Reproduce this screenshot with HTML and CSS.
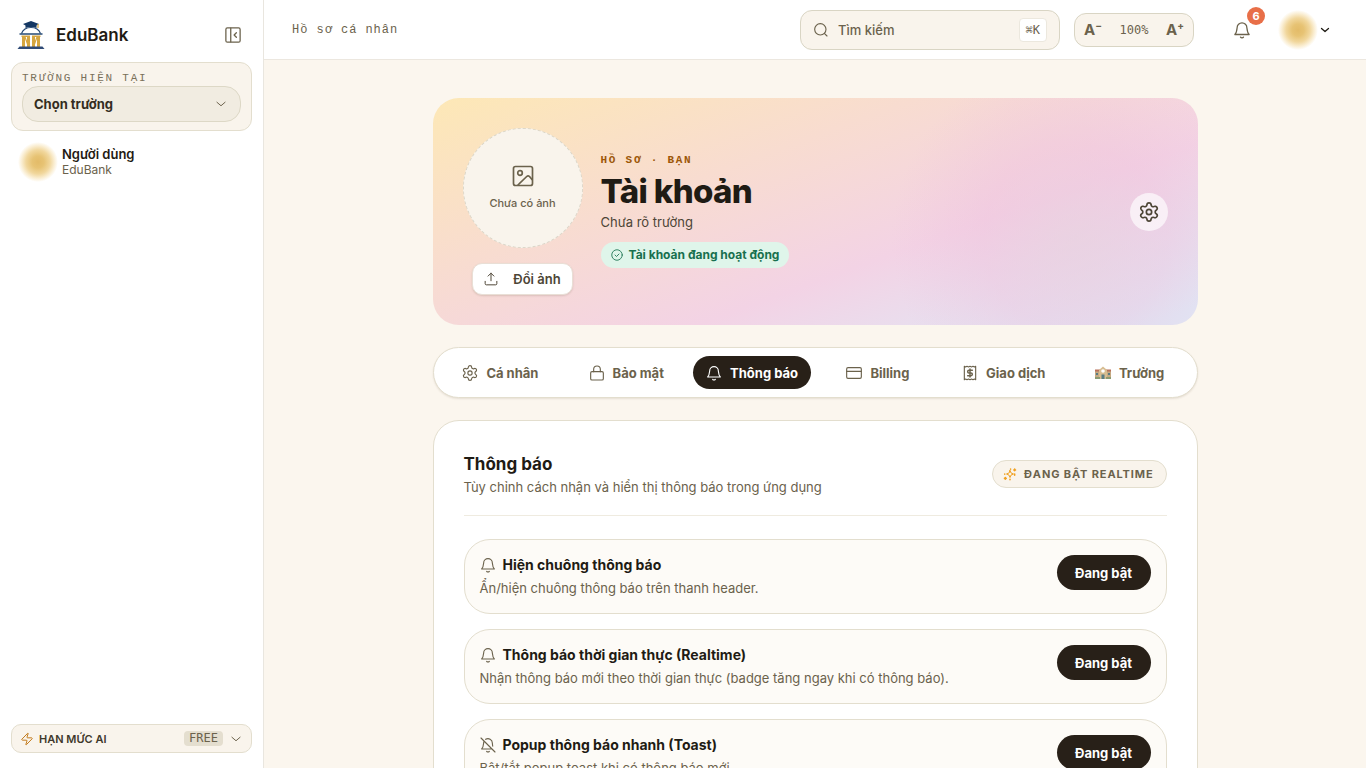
FILE: index.html
```html
<!DOCTYPE html>
<html lang="vi">
<head>
<meta charset="utf-8">
<meta name="viewport" content="width=device-width, initial-scale=1">
<title>EduBank – Hồ sơ cá nhân</title>
<link rel="stylesheet" href="styles.css">
</head>
<body>
<svg class="sprite" aria-hidden="true">
  <symbol id="i-bell" viewBox="0 0 24 24"><path d="M10 21.500a2.500 2.500 0 0 0 4 0M2.500 18h19c-1.800-1.800-2.500-3.500-3-9a6.500 6.500 0 0 0-13 0c-.5 5.500-1.200 7.200-3 9z"/></symbol>
  <symbol id="i-bell-off" viewBox="0 0 24 24"><path d="M10 21.500a2.500 2.500 0 0 0 4 0M17.500 18h-15c1.800-1.800 2.500-3.500 3-9 0-1 .2-1.800.5-2.500M8.500 3.500a6.500 6.500 0 0 1 10 5.500c.2 2 .3 3.500.6 4.700M1.500 1.500l21 21"/></symbol>
  <symbol id="i-gear" viewBox="0 0 24 24"><path d="M9.500 3.500a2.500 2.500 0 0 1 5 0 2.500 2.500 0 0 0 3.500 2 2.500 2.500 0 0 1 2.600 4.300 2.500 2.500 0 0 0 0 4.300 2.500 2.500 0 0 1-2.600 4.400 2.500 2.500 0 0 0-3.500 2 2.500 2.500 0 0 1-5 0 2.500 2.500 0 0 0-3.500-2 2.500 2.500 0 0 1-2.600-4.400 2.500 2.500 0 0 0 0-4.300A2.500 2.500 0 0 1 6 5.500a2.500 2.500 0 0 0 3.500-2"/><circle cx="12" cy="12" r="3.200"/></symbol>
  <symbol id="i-down" viewBox="0 0 24 24"><path d="m5 9 7 6 7-6"/></symbol>
</svg>
<div class="app">
  <aside class="sidebar">
    <div class="brand">
      <svg class="logo" viewBox="0 0 28 30" aria-hidden="true">
        <path d="M14 1 22 4 19.500 5.500V8q-5.500-2-11 0V5.500L6 4Z" fill="#143763"/>
        <path d="M21 4v4" stroke="#d6a640" stroke-width="1.200"/>
        <path d="M4.500 13.500C6 9.500 10 7.500 14 7.500s8 2 9.500 6" fill="none" stroke="#244873" stroke-width="1.200"/>
        <path d="M2.500 14h23" stroke="#244873" stroke-width="1.500"/>
        <path d="M4.500 15.500h8.500v1.500H4.500zM15 15.500h8.500v1.500H15zM5 17h3v10H5zM10 17h3v10h-3zM15 17h3v10h-3zM20 17h3v10h-3z" fill="#d6a640"/>
        <path d="m8 17 2.500 7M17.500 24l2.500-7" stroke="#d6a640" stroke-width="1.200"/>
        <path d="M2.500 26.500h23l2 2.500H.5z" fill="#304b76"/>
      </svg>
      <span class="brand-name">EduBank</span>
      <button class="plain collapse" type="button" aria-label="Thu gọn">
        <svg class="icon s18" viewBox="0 0 24 24"><rect x="2.500" y="2.500" width="19" height="19" rx="2"/><path d="M9 3v18M16.500 9l-3 3 3 3"/></svg>
      </button>
    </div>
    <section class="school">
      <span class="eyebrow school-label">TRƯỜNG HIỆN TẠI</span>
      <button class="school-select" type="button">Chọn trường <svg class="icon s14"><use href="#i-down"/></svg></button>
    </section>
    <div class="user">
      <span class="glow"></span>
      <div class="user-text"><strong>Người dùng</strong><span>EduBank</span></div>
    </div>
    <button class="quota" type="button">
      <svg class="icon s14 bolt" viewBox="0 0 24 24"><path d="M4 14a1 1 0 0 1-.8-1.600l9.900-10.200a.5.5 0 0 1 .9.500l-2 6A1 1 0 0 0 13 10h7a1 1 0 0 1 .8 1.600l-9.900 10.200a.5.5 0 0 1-.9-.5l2-6A1 1 0 0 0 11 14z"/></svg>
      <span>HẠN MỨC AI</span>
      <span class="plan">FREE</span>
      <svg class="icon s14"><use href="#i-down"/></svg>
    </button>
  </aside>

  <div class="page">
    <header class="topbar">
      <span class="crumb">Hồ sơ cá nhân</span>
      <label class="search">
        <svg class="icon s16" viewBox="0 0 24 24"><circle cx="11" cy="11" r="8.500"/><path d="m21 21-4-4"/></svg>
        <input type="search" placeholder="Tìm kiếm" aria-label="Tìm kiếm">
        <kbd>⌘K</kbd>
      </label>
      <div class="scale">
        <button class="plain" type="button">A<sup>−</sup></button>
        <span>100%</span>
        <button class="plain" type="button">A<sup>+</sup></button>
      </div>
      <button class="plain alerts" type="button" aria-label="Thông báo">
        <svg class="icon s18"><use href="#i-bell"/></svg>
        <span class="count">6</span>
      </button>
      <button class="plain account" type="button" aria-label="Tài khoản">
        <span class="glow"></span>
        <svg class="icon s12"><use href="#i-down"/></svg>
      </button>
    </header>

    <main class="content">
      <section class="hero">
        <div class="photo">
          <div class="photo-empty">
            <svg class="icon s24" viewBox="0 0 24 24"><rect x="2.500" y="2.500" width="19" height="19" rx="2"/><circle cx="9" cy="9" r="2.300"/><path d="m21 15.500-2.500-3a2 2 0 0 0-2.800 0L7 21"/></svg>
            <span>Chưa có ảnh</span>
          </div>
          <button class="upload" type="button">
            <svg class="icon s14" viewBox="0 0 24 24"><path d="M2 16v4a2 2 0 0 0 2 2h16a2 2 0 0 0 2-2v-4M17 7l-5-5-5 5M12 2v13"/></svg>
            Đổi ảnh
          </button>
        </div>
        <div class="identity">
          <span class="eyebrow hero-eyebrow">HỒ SƠ · BẠN</span>
          <h1>Tài khoản</h1>
          <p>Chưa rõ trường</p>
          <span class="status"><svg class="icon s12" viewBox="0 0 24 24"><circle cx="12" cy="12" r="10.500"/><path d="m8 12 3 3 5-5"/></svg>Tài khoản đang hoạt động</span>
        </div>
        <button class="plain settings" type="button" aria-label="Cài đặt"><svg class="icon s20"><use href="#i-gear"/></svg></button>
      </section>

      <nav class="tabs" aria-label="Hồ sơ">
        <button class="tab" type="button"><svg class="icon s16"><use href="#i-gear"/></svg>Cá nhân</button>
        <button class="tab" type="button"><svg class="icon s16" viewBox="0 0 24 24"><rect x="2.500" y="10" width="19" height="12.500" rx="2"/><path d="M7 10V6.500a5 5 0 0 1 10 0V10"/></svg>Bảo mật</button>
        <button class="tab active" type="button" aria-current="page"><svg class="icon s16"><use href="#i-bell"/></svg>Thông báo</button>
        <button class="tab" type="button"><svg class="icon s16" viewBox="0 0 24 24"><rect x="1" y="4" width="22" height="16" rx="2"/><path d="M1 9.500h22"/></svg>Billing</button>
        <button class="tab" type="button"><svg class="icon s16" viewBox="0 0 24 24"><path d="M3.500 2v20l2-1 2 1 2.200-1 2.300 1 2.300-1 2.200 1 2-1 2 1V2l-2 1-2-1-2.200 1L12 2 9.700 3 7.500 2l-2 1z"/><path d="M15.500 8h-5a2 2 0 0 0 0 4h3a2 2 0 0 1 0 4h-5M12 6v12" stroke-width="2.200"/></svg>Giao dịch</button>
        <button class="tab" type="button"><svg class="s16" viewBox="0 0 16 16" aria-hidden="true"><path d="M0 6h16v8H0z" fill="#c5a982"/><path d="M0 4.500h5v2H0zM11 4.500h5v2h-5z" fill="#b8715a"/><path d="M4 5 8 1.500 12 5v9H4z" fill="#d7bd91"/><circle cx="8" cy="6" r="1.800" fill="#fff"/><path d="M1 8h2v2H1zM13 8h2v2h-2zM6.500 9.500h3V14h-3z" fill="#587c83"/><path d="M0 12h5v2H0zM11 12h5v2h-5z" fill="#8b9a72"/></svg>Trường</button>
      </nav>

      <section class="panel">
        <header class="panel-head">
          <div><h2>Thông báo</h2><p>Tùy chỉnh cách nhận và hiển thị thông báo trong ứng dụng</p></div>
          <span class="live"><svg class="icon s14" viewBox="0 0 24 24"><path d="m12 6 1.800 4.200L18 12l-4.200 1.800L12 18l-1.800-4.200L6 12l4.200-1.800z"/><path d="M20 3.500v3M18.500 5h3M13 3.500v.5M4 18v3M2.500 19.500h3M12 21v1M20 12v2M3 12v.5" stroke-width="2.600"/></svg>ĐANG BẬT REALTIME</span>
        </header>
        <div class="rows">
          <article class="row">
            <div><h3><svg class="icon s16"><use href="#i-bell"/></svg>Hiện chuông thông báo</h3><p>Ẩn/hiện chuông thông báo trên thanh header.</p></div>
            <button class="toggle" type="button" aria-pressed="true">Đang bật</button>
          </article>
          <article class="row">
            <div><h3><svg class="icon s16"><use href="#i-bell"/></svg>Thông báo thời gian thực (Realtime)</h3><p>Nhận thông báo mới theo thời gian thực (badge tăng ngay khi có thông báo).</p></div>
            <button class="toggle" type="button" aria-pressed="true">Đang bật</button>
          </article>
          <article class="row">
            <div><h3><svg class="icon s16"><use href="#i-bell-off"/></svg>Popup thông báo nhanh (Toast)</h3><p>Bật/tắt popup toast khi có thông báo mới.</p></div>
            <button class="toggle" type="button" aria-pressed="true">Đang bật</button>
          </article>
        </div>
      </section>
    </main>
  </div>
</div>
</body>
</html>
```
FILE: styles.css
```css
:root {
  --ink: #1f1b14;
  --dark: #282018;
  --soft: #4d4536;
  --muted: #6b624c;
  --line: #e3dece;
  --cream: #f9f4ec;
  --mono: "Liberation Mono", monospace;
}
* { box-sizing: border-box; }
body {
  margin: 0;
  font-family: Inter, "Noto Sans", sans-serif;
  font-size: 13px;
  line-height: 20px;
  color: var(--ink);
  background: #fbf6ee;
}
h1, h2, h3, p { margin: 0; }
button, input { font: inherit; color: inherit; }
button { cursor: pointer; }
.plain { border: 0; padding: 0; background: none; }
.sprite { display: none; }
.icon { fill: none; stroke: currentColor; stroke-width: 1.7; stroke-linecap: round; stroke-linejoin: round; flex: none; }
.s12 { width: 12px; height: 12px; }
.s14 { width: 14px; height: 14px; }
.s16 { width: 16px; height: 16px; }
.s18 { width: 18px; height: 18px; }
.s20 { width: 20px; height: 20px; }
.s24 { width: 24px; height: 24px; }
.eyebrow { font-family: var(--mono); font-size: 11px; line-height: 14px; letter-spacing: 0.16em; }
.glow {
  width: 40px; height: 40px; border-radius: 50%; flex: none;
  background: radial-gradient(circle closest-side, #e3bb68 0, #e7c374 30%, #f1d79d 60%, #faeed3 82%, rgba(255, 250, 240, 0) 100%);
}

.app { display: flex; height: 100vh; overflow: hidden; }
.sidebar { width: 264px; flex: none; display: flex; flex-direction: column; padding: 15px 11px; background: #fff; border-right: 1px solid #e9e6df; }
.brand { display: flex; align-items: center; gap: 11px; height: 40px; padding: 0 10px 0 6px; margin-bottom: 7px; }
.logo { width: 28px; height: 30px; }
.brand-name { font-size: 17px; font-weight: 600; line-height: 24px; }
.collapse { display: flex; margin-left: auto; color: var(--muted); }
.school { display: flex; flex-direction: column; gap: 1px; padding: 8px 10px; background: var(--cream); border: 1px solid var(--line); border-radius: 12px; }
.school-label { color: #7a705a; }
.school-select { display: flex; align-items: center; justify-content: space-between; height: 36px; padding: 0 12px 0 11px; border: 1px solid #ddd8c6; border-radius: 16px; background: #f1ece1; color: #342d21; font-weight: 700; }
.school-select .icon { color: var(--muted); }
.user { display: flex; align-items: center; gap: 4px; padding: 11px 7px; }
.user-text { display: flex; flex-direction: column; line-height: 16px; }
.user-text strong { font-weight: 600; }
.user-text span { font-size: 12px; color: var(--muted); }
.quota { display: flex; align-items: center; gap: 5px; height: 29px; margin-top: auto; padding: 0 8px; border: 1px solid var(--line); border-radius: 10px; background: var(--cream); color: #40382a; font-size: 11px; font-weight: 600; }
.quota .icon:last-child { color: var(--muted); }
.quota .bolt { color: #c27a1c; }
.plan { margin-left: auto; margin-right: 1px; padding: 0 5px; border-radius: 4px; background: #e4decf; color: var(--muted); font: 12px/15px "DejaVu Sans Mono", monospace; }

.page { flex: 1; min-width: 0; display: flex; flex-direction: column; }
.topbar { flex: none; display: flex; align-items: center; height: 60px; padding: 0 35px 0 28px; background: #fff; border-bottom: 1px solid #ece7df; }
.crumb { margin-right: auto; font-family: var(--mono); font-size: 12px; letter-spacing: 0.08em; color: var(--muted); }
.search { display: flex; align-items: center; gap: 9px; width: 260px; height: 40px; margin-right: 14px; padding: 0 12px; border: 1px solid #d9d5c4; border-radius: 12px; background: var(--cream); color: var(--muted); }
.search input { flex: 1; min-width: 0; padding: 0; border: 0; outline: 0; background: none; font-weight: 500; }
.search input::placeholder { color: var(--muted); opacity: 1; }
.search kbd { padding: 0 6px; border: 1px solid #ece8de; border-radius: 4px; background: #fff; font: 12px/22px "DejaVu Sans Mono", monospace; }
.scale { display: flex; align-items: center; justify-content: space-between; width: 120px; height: 34px; margin-right: 39px; padding: 0 9px; border: 1px solid #d9d5c4; border-radius: 12px; background: var(--cream); color: var(--muted); font: 12px/20px "DejaVu Sans Mono", monospace; }
.scale button { font: 700 15px/20px Inter, sans-serif; }
.scale sup { font-size: 10px; line-height: 0; }
.alerts { position: relative; display: flex; margin-right: 27px; color: var(--muted); }
.count { position: absolute; left: 14px; top: -14px; width: 18px; height: 18px; border-radius: 50%; background: #e86f48; color: #fff; font-size: 11px; font-weight: 700; line-height: 18px; }
.account { display: flex; align-items: center; gap: 1px; color: var(--ink); }
.account .icon { stroke-width: 2.600; }

.content { flex: 1; min-height: 0; overflow-y: auto; scrollbar-width: none; padding: 38px 32px; display: flex; flex-direction: column; align-items: center; gap: 22px; background: #fbf6ee; }
.content > * { width: 100%; max-width: 765px; flex: none; }
.hero {
  display: flex; align-items: center; gap: 18px; padding: 30px; border-radius: 26px;
  background:
    radial-gradient(circle at 84% 62%, rgba(232, 205, 220, 0.6), rgba(238, 190, 218, 0.35) 14%, rgba(240, 200, 225, 0) 28%),
    linear-gradient(160deg, #fde8b6 0%, #f8dcd0 35%, #f3d3e5 64%, #dfe9f7 96%);
}
.photo { display: flex; flex-direction: column; align-items: center; gap: 15px; }
.photo-empty { display: flex; flex-direction: column; align-items: center; justify-content: center; gap: 5px; width: 120px; height: 120px; border: 1px dashed #dcd8cb; border-radius: 50%; background: var(--cream); color: var(--muted); font-size: 11px; font-weight: 500; }
.upload { display: flex; align-items: center; gap: 15px; height: 32px; padding: 0 11px; border: 1px solid #e9dfd6; border-radius: 10px; background: #fff; color: var(--soft); font-weight: 600; box-shadow: 0 1px 2px rgba(70, 50, 30, 0.15); }
.identity { flex: 1; display: flex; flex-direction: column; align-items: flex-start; }
.hero-eyebrow { color: #9c5708; font-weight: 700; }
.identity h1 { margin: 3px 0 0; font-size: 33px; font-weight: 800; line-height: 42px; letter-spacing: -0.02em; }
.identity p { color: var(--soft); }
.status { display: flex; align-items: center; gap: 6px; margin: 10px 0 2px; padding: 3px 10px; border-radius: 13px; background: #dff5ea; color: #18704e; font-size: 12px; font-weight: 700; }
.settings { display: grid; place-items: center; width: 38px; height: 38px; border-radius: 50%; background: rgba(255, 255, 255, 0.66); color: var(--soft); }
.settings .icon { stroke-width: 2; }

.tabs { display: grid; grid-template-columns: repeat(6, 1fr); gap: 8px; padding: 8px; border: 1px solid var(--line); border-radius: 26px; background: #fff; box-shadow: 0 1px 2px rgba(80, 60, 30, 0.12); }
.tab { display: flex; align-items: center; justify-content: center; gap: 8px; height: 33px; padding: 0; border: 0; border-radius: 17px; background: none; color: var(--muted); font-weight: 700; white-space: nowrap; }
.tab.active { background: var(--dark); color: #fff; }

.panel { padding: 30px; border: 1px solid var(--line); border-radius: 26px; background: #fff; }
.panel-head { display: flex; align-items: center; justify-content: space-between; padding-bottom: 18px; border-bottom: 1px solid #efebe0; }
.panel-head h2 { font-size: 17px; font-weight: 700; line-height: 26px; }
.panel-head p, .row p { color: var(--muted); }
.live { display: flex; align-items: center; gap: 7px; padding: 3px 12px 3px 10px; border: 1px solid var(--line); border-radius: 14px; background: var(--cream); color: var(--muted); font-size: 11px; font-weight: 700; letter-spacing: 0.08em; }
.live .icon { color: #f0a020; }
.rows { display: flex; flex-direction: column; gap: 15px; padding-top: 23px; }
.row { display: flex; align-items: flex-start; justify-content: space-between; padding: 15px; border: 1px solid var(--line); border-radius: 26px; background: #fdfbf7; }
.row h3 { display: flex; align-items: center; gap: 7px; margin-bottom: 3px; font-size: 14px; font-weight: 700; line-height: 20px; }
.row h3 .icon { color: var(--muted); }
.toggle { min-width: 94px; height: 35px; padding: 0 16px; border: 0; border-radius: 18px; background: var(--dark); color: #fff; font-weight: 700; }
```
